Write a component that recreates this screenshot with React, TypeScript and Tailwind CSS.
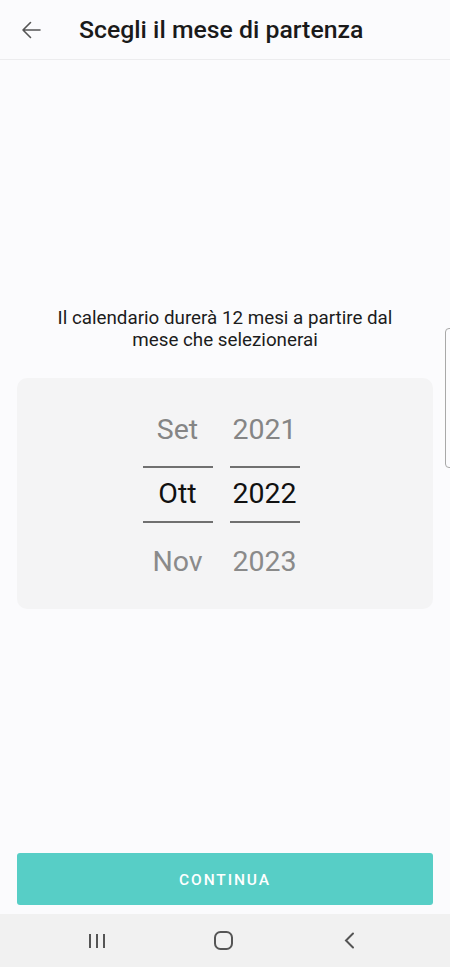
import React from "react";

const months = ["Set", "Ott", "Nov"];
const years = ["2021", "2022", "2023"];

const Column: React.FC<{ items: string[] }> = ({ items }) => {
  return (
    <div className="w-[70px] flex flex-col items-center">
      <div className="h-[72px] w-full flex items-center justify-center text-[28.5px] text-[#858585]">
        {items[0]}
      </div>
      <div className="h-[2px] w-full bg-[#707070]" />
      <div className="h-[53px] w-full flex items-center justify-center text-[28.5px] text-[#111111]">
        {items[1]}
      </div>
      <div className="h-[2px] w-full bg-[#707070]" />
      <div className="h-[79px] w-full flex items-center justify-center text-[28.5px] text-[#8a8a8a]">
        {items[2]}
      </div>
    </div>
  );
};

export default function App() {
  return (
    <div
      className="relative w-[450px] h-[967px] flex flex-col bg-[#fbfbfd] overflow-hidden"
      style={{ fontFamily: "Roboto, 'Noto Sans', sans-serif" }}
    >
      {/* header */}
      <div className="h-[60px] flex items-center border-b border-[#ececee] shrink-0">
        <div className="w-[79px] flex items-center pl-[21px]">
          <svg width="20" height="18" viewBox="0 0 20 18" fill="none">
            <path
              d="M19 9H2M9.5 1.5L2 9l7.5 7.5"
              stroke="#555555"
              strokeWidth="1.6"
              strokeLinecap="round"
              strokeLinejoin="round"
            />
          </svg>
        </div>
        <h1 className="text-[24.8px] font-medium text-[#1a1a1a]">
          Scegli il mese di partenza
        </h1>
      </div>

      {/* content */}
      <div className="flex-1 px-[17px] pt-[247px] flex flex-col">
        <p className="text-center text-[18.8px] leading-[22px] text-[#1c1c1c]">
          Il calendario durerà 12 mesi a partire dal
          <br />
          mese che selezionerai
        </p>
        <div className="mt-[27px] h-[231px] rounded-[10px] bg-[#f4f4f5] flex justify-center items-start pt-[16px] pr-[8px] gap-[17px]">
          <Column items={months} />
          <Column items={years} />
        </div>
      </div>

      {/* button */}
      <div className="px-[17px] pb-[9px] shrink-0">
        <button className="w-full h-[52px] pt-[3px] rounded-[3px] bg-[#57cec6] text-white text-[15.5px] font-medium tracking-[1.9px]">
          CONTINUA
        </button>
      </div>

      {/* nav bar */}
      <div className="h-[53px] bg-[#f1f1f1] flex items-center pl-[34px] shrink-0">
        <div className="w-[126px] flex justify-center">
          <svg width="18" height="16" viewBox="0 0 18 16" fill="none">
            <path d="M2 1v14M9 1v14M16 1v14" stroke="#555555" strokeWidth="2" />
          </svg>
        </div>
        <div className="w-[126px] flex justify-center">
          <svg width="19" height="19" viewBox="0 0 19 19" fill="none">
            <rect x="1" y="1" width="17" height="17" rx="5.5" stroke="#555555" strokeWidth="2" />
          </svg>
        </div>
        <div className="w-[126px] flex justify-center">
          <svg width="12" height="17" viewBox="0 0 12 17" fill="none">
            <path d="M10 1.5L3 8.5l7 7" stroke="#555555" strokeWidth="2" strokeLinecap="round" />
          </svg>
        </div>
      </div>

      {/* scroll indicator */}
      <div className="absolute left-[445px] top-[328px] w-[10px] h-[140px] rounded-[4px] border border-[#a8a8a8]" />
    </div>
  );
}
